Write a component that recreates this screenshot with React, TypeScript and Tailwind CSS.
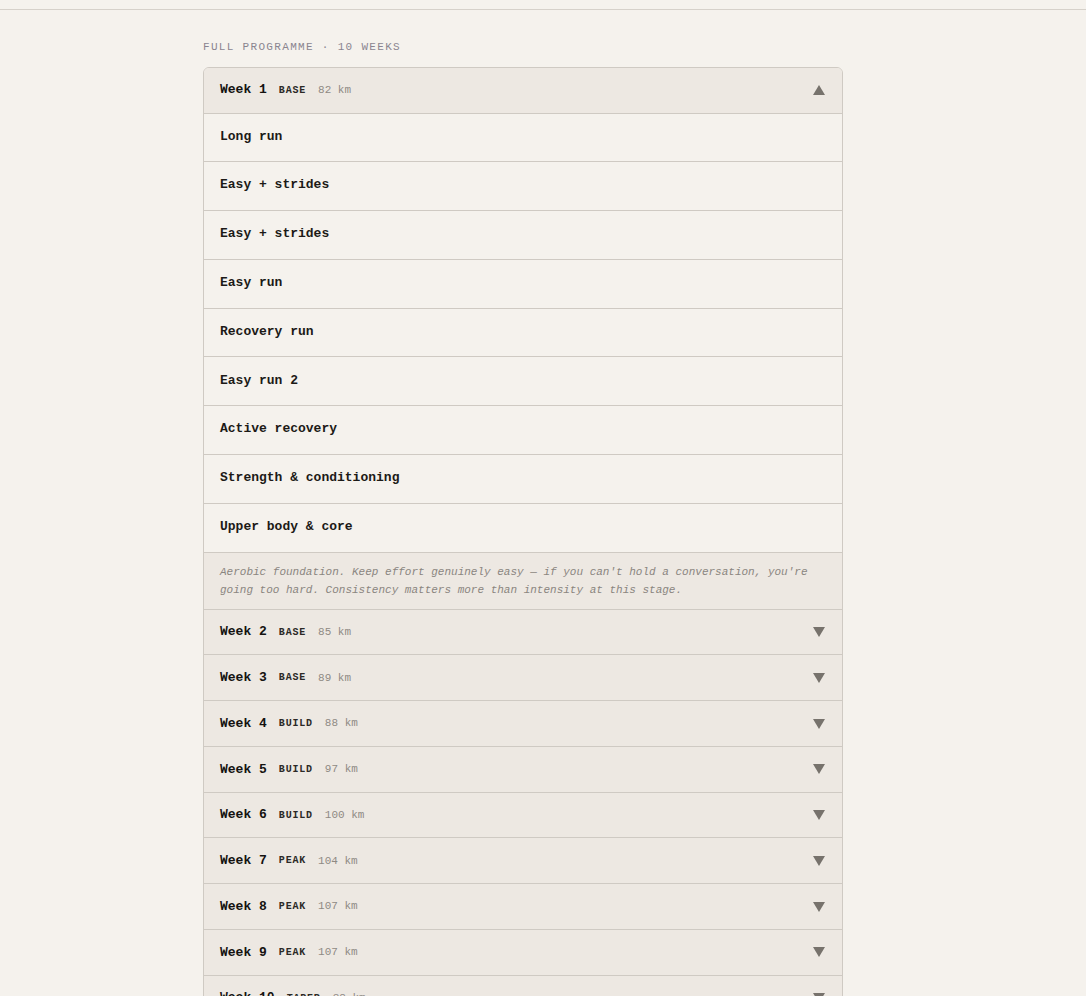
import React from "react";

const items = [
  "Long run",
  "Easy + strides",
  "Easy + strides",
  "Easy run",
  "Recovery run",
  "Easy run 2",
  "Active recovery",
  "Strength & conditioning",
  "Upper body & core",
];

const weeks = [
  { n: 2, phase: "BASE", km: 85 },
  { n: 3, phase: "BASE", km: 89 },
  { n: 4, phase: "BUILD", km: 88 },
  { n: 5, phase: "BUILD", km: 97 },
  { n: 6, phase: "BUILD", km: 100 },
  { n: 7, phase: "PEAK", km: 104 },
  { n: 8, phase: "PEAK", km: 107 },
  { n: 9, phase: "PEAK", km: 107 },
  { n: 10, phase: "TAPER", km: 38 },
];

function Tri({ up }: { up?: boolean }) {
  return (
    <svg width="12" height="10" viewBox="0 0 12 10" className="shrink-0">
      {up ? (
        <polygon points="6,0 12,10 0,10" fill="#77726c" />
      ) : (
        <polygon points="0,0 12,0 6,10" fill="#77726c" />
      )}
    </svg>
  );
}

function WeekHeader({ n, phase, km, open }: { n: number; phase: string; km: number; open?: boolean }) {
  return (
    <div className={`flex ${open ? "h-[45px]" : "h-[44.75px]"} items-center justify-between bg-[#ede8e2] px-4`}>
      <div className="flex items-center gap-3">
        <span className="text-[13px] font-bold text-[#141210]">Week {n}</span>
        <span className="text-[10px] font-bold tracking-[0.08em] text-[#2b2926]">{phase}</span>
        <span className="text-[11px] text-[#8f8a84]">{km} km</span>
      </div>
      <div className="pr-[1px]">
        <Tri up={open} />
      </div>
    </div>
  );
}

export default function App() {
  return (
    <div
      className="min-h-[996px] bg-[#f5f2ed]"
      style={{ fontFamily: '"Liberation Mono", "DejaVu Sans Mono", monospace' }}
    >
      <div className="h-[10px] border-b border-[#d6d1ca]" />
      <div className="ml-[203px] w-[640px] pt-[29px]">
        <div className="mb-[11px] text-[11px] tracking-[0.12em] text-[#8a8590]">
          FULL PROGRAMME · 10 WEEKS
        </div>
        <div className="overflow-hidden rounded-t-[6px] border border-[#cfcac3]">
          <WeekHeader n={1} phase="BASE" km={82} open />
          {items.map((it, i) => (
            <div
              key={i}
              className="flex h-[48.8px] items-center border-t border-[#cfcac3] bg-[#f5f2ed] px-4 pb-[2px] text-[13px] font-bold text-[#1c1a17]"
            >
              {it}
            </div>
          ))}
          <div className="border-t border-[#cfcac3] bg-[#ede8e2] px-4 pb-[10px] pt-[10px] text-[11px] italic leading-[18px] text-[#8a857f]">
            Aerobic foundation. Keep effort genuinely easy — if you can't hold a conversation, you're going too hard. Consistency matters more than intensity at this stage.
          </div>
          {weeks.map((w) => (
            <div key={w.n} className="border-t border-[#cfcac3]">
              <WeekHeader n={w.n} phase={w.phase} km={w.km} />
            </div>
          ))}
        </div>
      </div>
    </div>
  );
}
